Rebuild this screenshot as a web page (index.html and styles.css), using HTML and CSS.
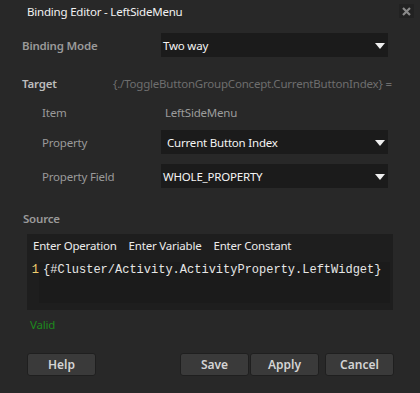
FILE: index.html
```html
<!DOCTYPE html>
<html>
<head>
<meta charset="utf-8">
<link rel="stylesheet" href="styles.css">
</head>
<body>
<div class="dialog">
  <div class="titlebar">
    <span class="title">Binding Editor - LeftSideMenu</span>
    <span class="close"><svg width="9" height="9" viewBox="0 0 9 9"><path d="M1 1L8 8M8 1L1 8" stroke="#8a8a8a" stroke-width="2.2"/></svg></span>
  </div>

  <div class="row mode-row">
    <span class="label strong">Binding Mode</span>
    <div class="select"><span>Two way</span><span class="arrow"></span></div>
  </div>

  <div class="row target-row">
    <span class="label strong bright">Target</span>
    <span class="path">{./ToggleButtonGroupConcept.CurrentButtonIndex} =</span>
  </div>

  <div class="row sub item-row">
    <span class="label">Item</span>
    <span class="value">LeftSideMenu</span>
  </div>

  <div class="row sub prop-row">
    <span class="label">Property</span>
    <div class="select"><span>Current Button Index</span><span class="arrow"></span></div>
  </div>

  <div class="row sub field-row">
    <span class="label">Property Field</span>
    <div class="select"><span>WHOLE_PROPERTY</span><span class="arrow"></span></div>
  </div>

  <div class="source-label label strong">Source</div>

  <div class="panel">
    <div class="toolbar">
      <span>Enter Operation</span>
      <span>Enter Variable</span>
      <span>Enter Constant</span>
    </div>
    <div class="editor">
      <span class="lineno">1</span>
      <div class="code">{#Cluster/Activity.ActivityProperty.LeftWidget}</div>
    </div>
  </div>

  <div class="valid">Valid</div>

  <div class="buttons">
    <button class="btn">Help</button>
    <div class="right">
      <button class="btn">Save</button>
      <button class="btn">Apply</button>
      <button class="btn cancel">Cancel</button>
    </div>
  </div>
</div>
</body>
</html>
```

FILE: styles.css
```css
html, body {
  margin: 0;
  padding: 0;
  background: #282828;
}
body {
  width: 420px;
  height: 393px;
  overflow: hidden;
  font-family: "Noto Sans", "Open Sans", sans-serif;
  font-size: 11.5px;
  letter-spacing: -0.2px;
  color: #a0a0a0;
}
.dialog {
  display: flex;
  flex-direction: column;
}
.titlebar {
  height: 24px;
  display: flex;
  align-items: center;
  justify-content: space-between;
  padding: 0 6px 0 27px;
}
.title {
  color: #f2f2f2;
  margin-top: -1px;
}
.close {
  width: 15px;
  height: 14px;
  background: #222222;
  display: flex;
  align-items: center;
  justify-content: center;
  margin-top: -2px;
}
.row {
  display: flex;
  align-items: center;
  padding-left: 22px;
}
.row.sub {
  padding-left: 42px;
}
.label {
  color: #9a9a9a;
}
.label.strong {
  font-weight: 600;
}
.label.bright {
  color: #bdbdbd;
}
.row .label {
  width: 139px;
  flex: none;
}
.row.sub .label {
  width: 119px;
}
.mode-row {
  margin-top: 9px;
}
.select {
  width: 227px;
  height: 24px;
  background: #1b1b1b;
  color: #f4f4f4;
  display: flex;
  align-items: center;
  justify-content: space-between;
  padding: 0 3px 0 2px;
  box-sizing: border-box;
}
.arrow {
  width: 0;
  height: 0;
  border-left: 5px solid transparent;
  border-right: 5px solid transparent;
  border-top: 6px solid #f0f0f0;
  margin-top: 1px;
}
.target-row {
  margin-top: 15px;
  height: 22px;
}
.target-row .label {
  width: 91px;
}
.path {
  color: #6e6e6e;
  white-space: nowrap;
}
.item-row {
  margin-top: 7px;
  height: 22px;
}
.item-row .value {
  color: #9c9c9c;
  padding-left: 4px;
}
.prop-row {
  margin-top: 7px;
}
.prop-row .select span:first-child {
  padding-left: 4px;
}
.field-row {
  margin-top: 10px;
}
.source-label {
  padding-left: 23px;
  margin-top: 22px;
  height: 17px;
  line-height: 17px;
}
.panel {
  margin: 7px 27px 0 27px;
  height: 76px;
  background: #1e1e1e;
  display: flex;
  flex-direction: column;
}
.toolbar {
  display: flex;
  gap: 12px;
  padding: 2px 0 0 6px;
  height: 18px;
  color: #ececec;
  align-items: center;
}
.editor {
  display: flex;
  margin-top: 8px;
  height: 41px;
  margin-right: 3px;
}
.lineno {
  width: 12px;
  flex: none;
  text-align: right;
  color: #f0d070;
  font-family: "Liberation Mono", monospace;
  font-size: 12px;
  letter-spacing: 0;
  padding-top: 1px;
}
.code {
  flex: 1;
  background: #1b1b1b;
  color: #e6e6e6;
  font-family: "Liberation Mono", monospace;
  font-size: 12px;
  letter-spacing: 0;
  padding: 1px 0 0 4px;
  white-space: nowrap;
}
.valid {
  color: #1d8a1d;
  padding-left: 30px;
  margin-top: 6px;
  height: 17px;
  line-height: 17px;
}
.buttons {
  display: flex;
  justify-content: space-between;
  padding: 0 26px 0 27px;
  margin-top: 20px;
}
.right {
  display: flex;
  gap: 1px;
}
.btn {
  width: 69px;
  height: 23px;
  background: #3a3a3a;
  border: 1px solid #1f1f1f;
  border-radius: 3px;
  color: #d4d4d4;
  font-family: "Noto Sans", "Open Sans", sans-serif;
  font-size: 12px;
  font-weight: 600;
  padding: 0;
}
.btn.cancel {
  margin-left: 5px;
}
```
